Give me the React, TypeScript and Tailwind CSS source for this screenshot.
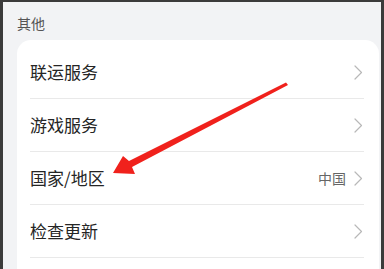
import React from 'react';

const rows = [
  { label: '联运服务', value: '' },
  { label: '游戏服务', value: '' },
  { label: '国家/地区', value: '中国' },
  { label: '检查更新', value: '' },
];

const Chevron = () => (
  <svg width="9" height="15" viewBox="0 0 9 15" fill="none">
    <polyline points="1,1 7.5,7.5 1,14" stroke="#b8b8b8" strokeWidth="1.2" strokeLinecap="round" strokeLinejoin="round" />
  </svg>
);

const App = () => {
  return (
    <div
      className="relative w-[384px] h-[269px] overflow-hidden bg-[#3b3b3b] pt-[2px] pl-[3px] pr-[3px]"
      style={{ fontFamily: '"Noto Sans CJK SC", "Noto Sans", sans-serif' }}
    >
      <div className="h-full bg-[#f2f3f5] pl-[14px] pr-[2px] pt-[11px]">
        <div className="text-[14px] leading-[20px] text-[#555]">其他</div>

        {/* settings card */}
        <div className="mt-[7px] h-[260px] bg-white rounded-[14px] pt-[6px] pl-[13px] pr-[15px]">
          {rows.map((row) => (
            <div key={row.label} className="h-[53px] flex items-center justify-between border-b border-[#e9e9e9]">
              <span className="text-[17px] text-[#252525]">{row.label}</span>
              <div className="flex items-center gap-[8px] mr-[1px]">
                {row.value && <span className="text-[14px] text-[#666]">{row.value}</span>}
                <Chevron />
              </div>
            </div>
          ))}
        </div>
      </div>

      {/* red annotation arrow */}
      <svg className="absolute top-0 left-0 pointer-events-none" width="384" height="269" viewBox="0 0 384 269">
        <polygon
          points="113,173 123,156 129,161 286,82.5 288,85 132,167 135,174"
          fill="#f0211c"
        />
      </svg>
    </div>
  );
};

export default App;
